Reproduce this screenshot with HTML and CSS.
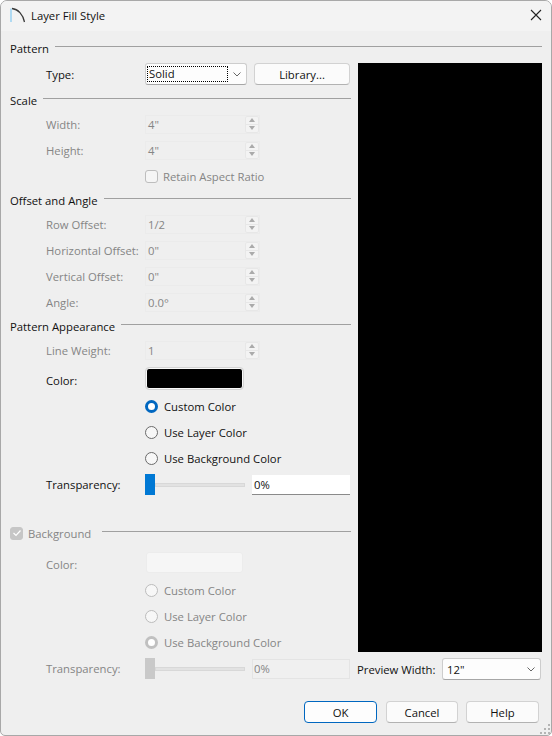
FILE: index.html
```html
<!DOCTYPE html>
<html lang="en">
<head>
<meta charset="utf-8">
<title>Layer Fill Style</title>
<link rel="stylesheet" href="styles.css">
</head>
<body>
<div class="window">
  <header class="titlebar">
    <svg class="app-icon" width="16" height="16" viewBox="0 0 16 16"><path d="M1 1.500V15" stroke="#9fd4f2" stroke-width="1.600" fill="none"/><path d="M2 1.500C8 2 13 7.500 14.500 15" stroke="#3a3a3a" stroke-width="1.300" fill="none"/></svg>
    <span class="title">Layer Fill Style</span>
    <svg class="close" width="12" height="12" viewBox="0 0 12 12"><path d="M1 1L11 11M11 1L1 11" stroke="#222" stroke-width="1.100" fill="none"/></svg>
  </header>
  <div class="content">
    <div class="heading heading-top"><span>Pattern</span><i class="rule"></i></div>
    <div class="columns">
      <div class="left">
        <div class="row row-type">
          <label class="lab">Type:</label>
          <div class="select select-type"><span class="focus">Solid</span><svg class="chev" width="8" height="5" viewBox="0 0 8 5"><path d="M.5.500L4 4 7.500.500" stroke="#666" fill="none"/></svg></div>
          <button class="btn btn-lib">Library...</button>
        </div>

        <div class="heading"><span>Scale</span><i class="rule"></i></div>
        <div class="row off"><label class="lab">Width:</label><div class="spin"><span>4"</span><div class="spinbtn"><b class="up"></b><b class="down"></b></div></div></div>
        <div class="row off"><label class="lab">Height:</label><div class="spin"><span>4"</span><div class="spinbtn"><b class="up"></b><b class="down"></b></div></div></div>
        <div class="row off"><i class="lab"></i><span class="check"></span><span class="check-text">Retain Aspect Ratio</span></div>

        <div class="heading"><span>Offset and Angle</span><i class="rule"></i></div>
        <div class="row off"><label class="lab">Row Offset:</label><div class="spin"><span>1/2</span><div class="spinbtn"><b class="up"></b><b class="down"></b></div></div></div>
        <div class="row off"><label class="lab">Horizontal Offset:</label><div class="spin"><span>0"</span><div class="spinbtn"><b class="up"></b><b class="down"></b></div></div></div>
        <div class="row off"><label class="lab">Vertical Offset:</label><div class="spin"><span>0"</span><div class="spinbtn"><b class="up"></b><b class="down"></b></div></div></div>
        <div class="row off"><label class="lab">Angle:</label><div class="spin"><span>0.0°</span><div class="spinbtn"><b class="up"></b><b class="down"></b></div></div></div>

        <div class="heading"><span>Pattern Appearance</span><i class="rule"></i></div>
        <div class="row off"><label class="lab">Line Weight:</label><div class="spin"><span>1</span><div class="spinbtn"><b class="up"></b><b class="down"></b></div></div></div>
        <div class="row row-color"><label class="lab">Color:</label><div class="swatch"></div></div>
        <div class="row"><i class="lab"></i><span class="radio radio-on"></span><span class="radio-text">Custom Color</span></div>
        <div class="row"><i class="lab"></i><span class="radio"></span><span class="radio-text">Use Layer Color</span></div>
        <div class="row"><i class="lab"></i><span class="radio"></span><span class="radio-text">Use Background Color</span></div>
        <div class="row row-trans">
          <label class="lab">Transparency:</label>
          <div class="slider"><i class="thumb"></i><i class="track"></i></div>
          <div class="pct">0%</div>
        </div>

        <div class="heading heading-bg off">
          <span class="check check-on"><svg width="10" height="8" viewBox="0 0 10 8"><path d="M1.500 4L4 6.500 8.500 1.500" stroke="#fff" stroke-width="1.200" fill="none"/></svg></span>
          <span class="bg-text">Background</span><i class="rule rule-bg"></i>
        </div>
        <div class="row row-color2 off"><label class="lab">Color:</label><div class="swatch swatch-off"></div></div>
        <div class="row off"><i class="lab"></i><span class="radio radio-dis"></span><span class="radio-text">Custom Color</span></div>
        <div class="row off"><i class="lab"></i><span class="radio radio-dis"></span><span class="radio-text">Use Layer Color</span></div>
        <div class="row off"><i class="lab"></i><span class="radio radio-dis-on"></span><span class="radio-text">Use Background Color</span></div>
        <div class="row row-trans off">
          <label class="lab">Transparency:</label>
          <div class="slider"><i class="thumb thumb-off"></i><i class="track"></i></div>
          <div class="pct pct-off">0%</div>
        </div>
      </div>
      <div class="right">
        <div class="preview"></div>
        <div class="preview-row">
          <label class="prev-lab">Preview Width:</label>
          <div class="select select-prev"><span>12"</span><svg class="chev" width="8" height="5" viewBox="0 0 8 5"><path d="M.5.500L4 4 7.500.500" stroke="#666" fill="none"/></svg></div>
        </div>
      </div>
    </div>
    <div class="actions">
      <button class="btn btn-act btn-ok">OK</button>
      <button class="btn btn-act btn-cancel">Cancel</button>
      <button class="btn btn-act">Help</button>
    </div>
  </div>
  <svg class="grip" width="11" height="11" viewBox="0 0 11 11" fill="#b4b4b4"><rect x="8" y="0" width="2" height="2"/><rect x="4" y="4" width="2" height="2"/><rect x="8" y="4" width="2" height="2"/><rect x="0" y="8" width="2" height="2"/><rect x="4" y="8" width="2" height="2"/><rect x="8" y="8" width="2" height="2"/></svg>
</div>
</body>
</html>
```
FILE: styles.css
```css
* { box-sizing: border-box; }
html, body { margin: 0; padding: 0; }
body {
  width: 552px;
  height: 736px;
  overflow: hidden;
  background: #fff;
  font-family: "Open Sans", "Noto Sans", "Liberation Sans", sans-serif;
  font-size: 11.3px;
  color: #111;
}
.window {
  position: relative;
  width: 552px;
  height: 736px;
  background: #efefef;
  border: 1px solid #a8a8a8;
  border-radius: 7px 7px 5px 5px;
  overflow: hidden;
}
.titlebar {
  height: 30px;
  background: #f3f3f3;
  display: flex;
  align-items: center;
  padding: 0 9px;
}
.app-icon { flex: none; margin: 0 5px 2px 0; }
.title { flex: 1; font-size: 11.3px; margin-bottom: 2px; }
.close { margin-bottom: 2px; }
.content { padding: 0 9px; }
.heading {
  height: 22px;
  display: flex;
  align-items: center;
  gap: 6px;
}
.heading-top { height: 22px; margin-top: 6px; width: 532px; }
.rule { flex: 1; height: 1px; background: #a0a0a0; display: block; margin-top: -3px; }
.columns { display: flex; gap: 7px; }
.left { width: 341px; flex: none; }
.right { width: 184px; flex: none; padding-top: 4px; }
.row {
  height: 26px;
  display: flex;
  align-items: center;
}
.lab { flex: none; white-space: nowrap; font-style: normal; display: block; width: 135px; padding-left: 36px; }
.off { color: #858585; }
.row-type { height: 30px; }
.select {
  height: 22px;
  background: #fdfdfd;
  border: 1px solid #cdcdcd;
  border-bottom-color: #a6a6a6;
  border-radius: 3px;
  display: flex;
  align-items: center;
  justify-content: space-between;
  padding: 0 5px 0 1px;
}
.select-type { width: 102px; margin-right: 7px; }
.focus { width: 81px; height: 16px; line-height: 14px; border: 1px dotted #000; padding-left: 1px; }
.btn {
  font: inherit;
  color: #111;
  background: #fbfbfb;
  border: 1px solid #d2d2d2;
  border-bottom-color: #b2b2b2;
  border-radius: 4px;
  padding: 0;
  height: 22px;
}
.btn-lib { width: 96px; }
.spin {
  width: 115px;
  height: 19px;
  background: #efefef;
  border: 1px solid #ebebeb;
  display: flex;
  align-items: center;
  justify-content: space-between;
  padding-left: 2px;
}
.spinbtn { width: 14px; height: 17px; display: flex; flex-direction: column; border: 1px solid #e7e7e7; border-radius: 2px; background: #f3f3f3; }
.up, .down { flex: 1; display: flex; align-items: center; justify-content: center; }
.up { border-bottom: 1px solid #e7e7e7; }
.up::before, .down::before { content: ""; width: 0; height: 0; border-left: 3px solid transparent; border-right: 3px solid transparent; display: block; }
.up::before { border-bottom: 4px solid #aaa; }
.down::before { border-top: 4px solid #aaa; }
.check {
  width: 13px;
  height: 13px;
  border: 1px solid #bdbdbd;
  border-radius: 3px;
  background: #f5f5f5;
  flex: none;
  display: flex;
  align-items: center;
  justify-content: center;
}
.check-text { margin-left: 5px; }
.check-on { background: #c6c6c6; border-color: #c6c6c6; }
.row-color { margin-top: 4px; }
.swatch {
  width: 97px;
  height: 21px;
  margin: 0 0 3px 1px;
  background: #000;
  border: 1px solid #fafafa;
  outline: 1px solid #d4d4d4;
  border-radius: 3px;
}
.swatch-off { background: #f6f6f6; border: 1px solid #ececec; outline: none; margin-bottom: 4px; }
.radio {
  width: 13px;
  height: 13px;
  border-radius: 50%;
  border: 1px solid #6b6b6b;
  background: #f7f7f7;
  flex: none;
}
.radio-on { background: #fff; border: 3.500px solid #0067c0; }
.radio-dis { border-color: #bcbcbc; background: #f7f7f7; }
.radio-dis-on { background: #fff; border: 3.500px solid #c0c0c0; }
.radio-text { margin-left: 6px; }
.row-trans { height: 27px; }
.slider {
  width: 100px;
  height: 21px;
  margin-right: 7px;
  display: flex;
  align-items: center;
}
.thumb { width: 10px; height: 21px; background: #0078d4; display: block; flex: none; }
.thumb-off { background: #c9c9c9; }
.track { flex: 1; height: 4px; background: #e2e2e2; border: 1px solid #d8d8d8; display: block; }
.pct {
  width: 98px;
  height: 20px;
  margin-top: 1px;
  background: #fff;
  border-bottom: 1px solid #8a8a8a;
  line-height: 19px;
  padding-left: 2px;
}
.pct-off { background: #f0f0f0; border: 1px solid #e4e4e4; line-height: 18px; padding-left: 1px; }
.heading-bg { margin-top: 22px; gap: 0; height: 26px; }
.bg-text { margin-left: 5px; }
.rule-bg { margin-left: 11px; }
.row-color2 { margin-top: 5px; }
.preview { height: 589px; background: #000; }
.preview-row { display: flex; align-items: center; justify-content: space-between; height: 22px; margin-top: 6px; margin-left: -1px; }
.select-prev { width: 99px; margin-right: 1px; padding-left: 4px; }
.actions { display: flex; justify-content: flex-end; gap: 8px; margin-top: 19px; padding-right: 3px; }
.btn-act { width: 73px; }
.btn-cancel { width: 72px; margin-left: 1px; }
.btn-ok { border: 1px solid #0067c0; background: #fdfdfd; }
.grip { position: absolute; right: 0; bottom: 0; }
```
